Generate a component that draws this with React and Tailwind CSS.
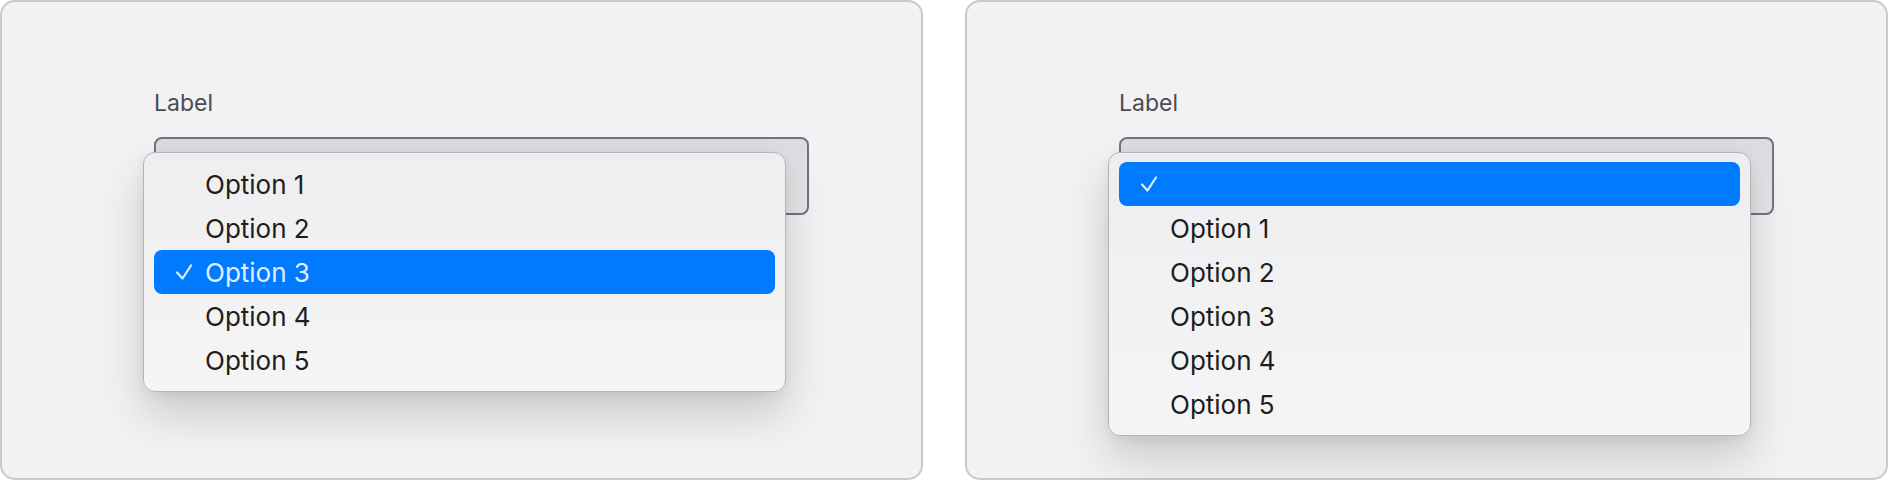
import React from 'react';

const OPTIONS = ['Option 1', 'Option 2', 'Option 3', 'Option 4', 'Option 5'];

const Check = () => (
  <svg className="w-4 h-4 shrink-0" viewBox="0 0 16 16" fill="none">
    <path d="M1 8.5 L6.5 14.5 L15 1.5" stroke="currentColor" strokeWidth="2.2" strokeLinecap="round" strokeLinejoin="round" />
  </svg>
);

const MenuRow = ({ label, selected }) => (
  <div
    className={
      selected
        ? 'flex items-center h-[44px] pl-[22px] rounded-[8px] bg-[#007aff] text-[#e3eeff]'
        : 'flex items-center h-[44px] pl-[22px] rounded-[8px] text-[#1d1d20]'
    }
  >
    <span className="w-4 h-4 flex items-center">{selected && <Check />}</span>
    <span className="ml-[13px] pt-[2px] text-[26px] leading-[42px] whitespace-nowrap">{label}</span>
  </div>
);

const SelectPanel = ({ rows, selectedIndex }) => (
  <div className="w-[923px] h-[480px] shrink-0 rounded-[15px] border-2 border-[#c7c9ce] bg-[#f2f2f4] pl-[152px] pt-[87px]">
    <div className="text-[23px] leading-[28px] text-[#4b4b53]">Label</div>
    {/* select trigger with its open menu */}
    <div className="relative mt-5 w-[655px]">
      <div className="h-[78px] rounded-[8px] border-2 border-[#71737e] bg-gradient-to-b from-[#dcdce0] to-[#e8e8eb]" />
      <div className="absolute left-[-11px] top-[15px] w-[643px] rounded-[12px] border border-[#b3b3b8] bg-gradient-to-b from-[#eeeef0] to-[#f5f5f6] px-[10px] py-[9px] shadow-[0_22px_45px_rgba(0,0,0,0.17),0_4px_12px_rgba(0,0,0,0.06)]">
        {rows.map((r, i) => (
          <MenuRow key={i} label={r} selected={i === selectedIndex} />
        ))}
      </div>
    </div>
  </div>
);

export default function App() {
  return (
    <div className="flex gap-[42px] w-[1888px] h-[480px] bg-white font-['Inter','Noto_Sans',sans-serif]">
      <SelectPanel rows={OPTIONS} selectedIndex={2} />
      <SelectPanel rows={['', ...OPTIONS]} selectedIndex={0} />
    </div>
  );
}
